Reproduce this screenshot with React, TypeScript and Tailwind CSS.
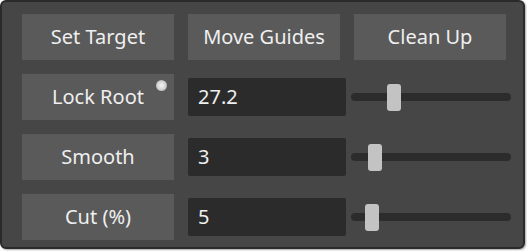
import React from "react";

const font = { fontFamily: '"Noto Sans", "Open Sans", sans-serif' };

function Btn({ label, dot }: { label: string; dot?: boolean }) {
  return (
    <button className="relative w-[152px] h-[46px] bg-[#5a5a5a] text-[#efefef] text-[20px] flex items-center justify-center">
      {label}
      {dot && (
        <span className="absolute left-[134px] top-[6px] w-[11px] h-[11px] rounded-full bg-[radial-gradient(circle,#f4f4f4_0%,#d6d6d6_50%,#8e8e8e_100%)]" />
      )}
    </button>
  );
}

function Slider({ pos }: { pos: number }) {
  return (
    <div className="relative w-[160px] h-[27px] ml-[5px] flex items-center">
      <div className="w-full h-[8px] rounded-full bg-[#2c2c2c]" />
      <div
        className="absolute top-0 w-[14px] h-[27px] rounded-[3px] bg-[#c3c3c3]"
        style={{ left: pos }}
      />
    </div>
  );
}

function Row({ label, value, pos, dot }: { label: string; value: string; pos: number; dot?: boolean }) {
  return (
    <div className="flex items-center">
      <Btn label={label} dot={dot} />
      <div className="ml-[14px] w-[158px] h-[38px] bg-[#2b2b2b] rounded-[2px] text-[#efefef] text-[20px] flex items-center pl-[10px]">
        {value}
      </div>
      <Slider pos={pos} />
    </div>
  );
}

export default function App() {
  return (
    <div className="bg-white w-[527px] h-[251px]" style={font}>
      <div className="w-[525px] h-[249px] border-2 border-[#2a2a2a] rounded-[6px] bg-[#464646] pt-[12px] pl-[20px] flex flex-col gap-[14px] shadow-[1px_1px_2px_rgba(0,0,0,0.35)]">
        <div className="flex gap-[14px]">
          <Btn label="Set Target" />
          <Btn label="Move Guides" />
          <Btn label="Clean Up" />
        </div>
        <Row label="Lock Root" value="27.2" pos={36} dot />
        <Row label="Smooth" value="3" pos={17} />
        <Row label="Cut (%)" value="5" pos={14} />
      </div>
    </div>
  );
}
